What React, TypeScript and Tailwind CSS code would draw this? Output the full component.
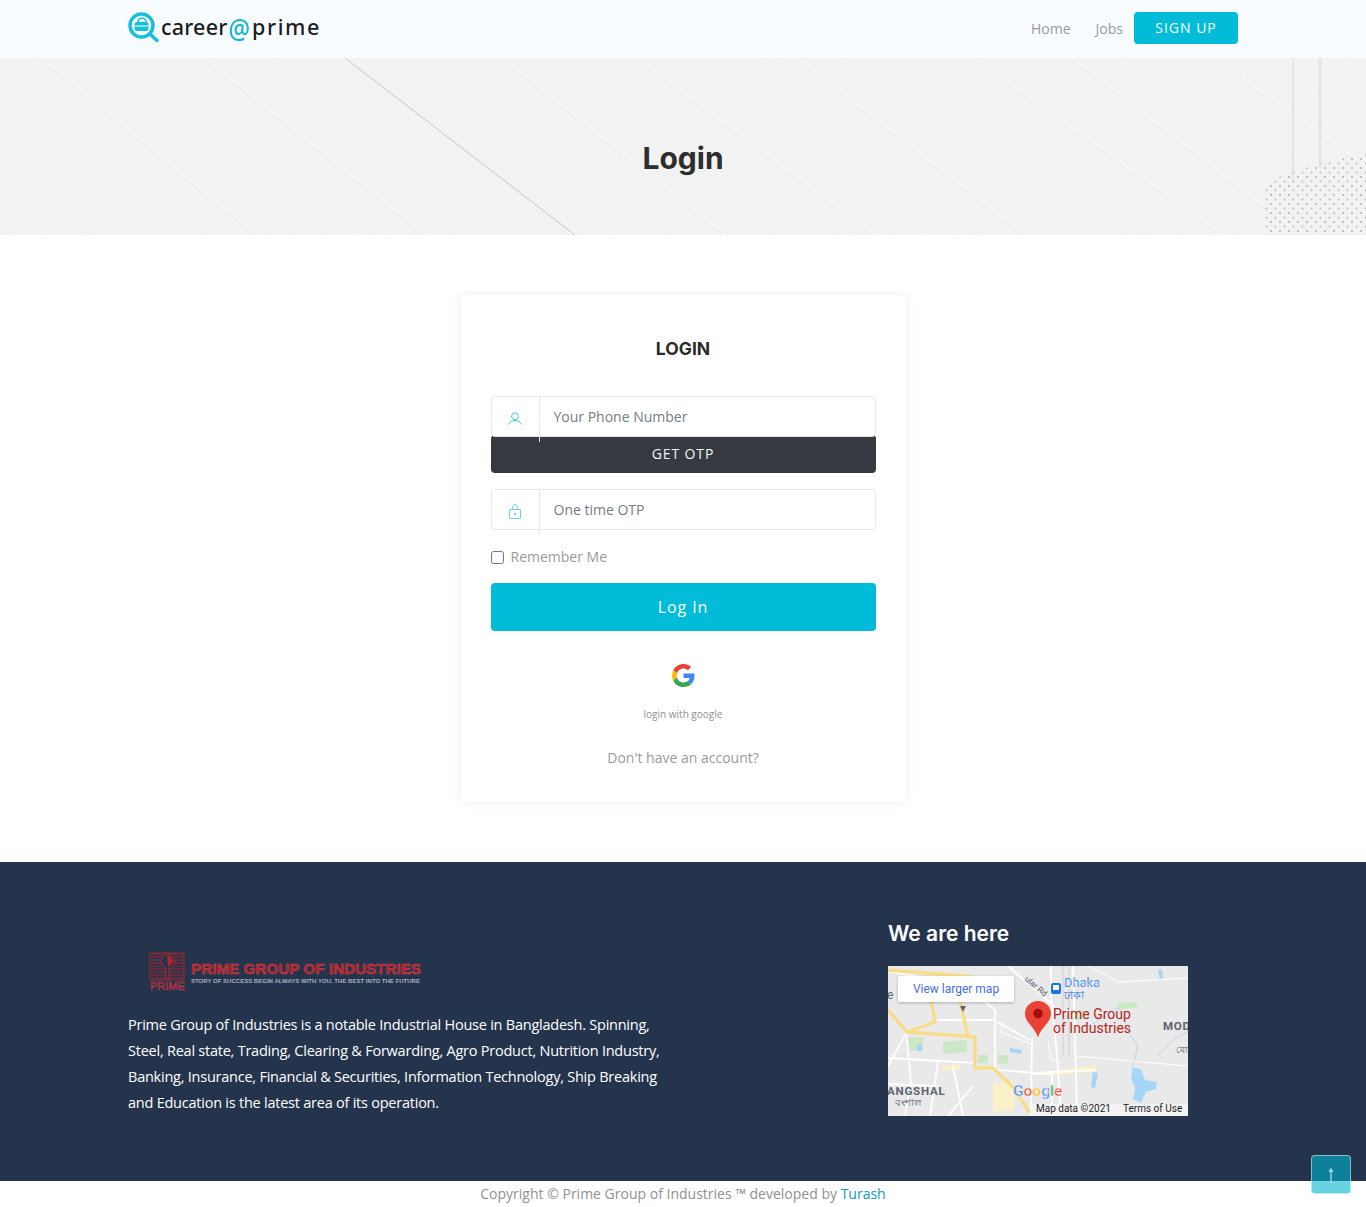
function LogoIcon() {
  return (
    <svg width="32" height="31" viewBox="0 0 32 31" fill="none">
      <circle cx="13.5" cy="13.5" r="11.500" stroke="#17c0da" strokeWidth="3.500" />
      <path d="M6.500 12.500c0-1.500 1-2.500 2.500-2.500h9c1.500 0 2.500 1 2.500 2.500v4c0 1.500-1 2.500-2.500 2.500H9c-1.500 0-2.500-1-2.500-2.500z" fill="#17c0da" />
      <path d="M10 10c0-5 8-5 8 0" stroke="#17c0da" strokeWidth="1.500" />
      <path d="M6.500 14h14" stroke="#fff" strokeWidth="1" />
      <path d="M22 22l7 6.500" stroke="#17c0da" strokeWidth="3.500" strokeLinecap="round" />
    </svg>
  );
}

function HeroArt() {
  const soft = [
    [-30, 172, 90, 270], [30, -8, 270, 190], [195, -6, 440, 190], [490, -8, 740, 190],
    [625, -8, 890, 190], [785, -8, 1040, 190], [960, -8, 1240, 190], [1060, -8, 1290, 170], [1240, 20, 1366, 110],
  ];
  return (
    <svg className="absolute inset-0" width="1366" height="177" viewBox="0 0 1366 177">
      <defs>
        <pattern id="heroDots" width="9" height="9" patternUnits="userSpaceOnUse">
          <circle cx="2" cy="2" r="1.100" fill="#b5b5b5" />
          <circle cx="6.500" cy="6.500" r="1.100" fill="#c4c4c4" />
        </pattern>
        <filter id="heroGrain">
          <feTurbulence type="fractalNoise" baseFrequency="0.9" numOctaves="2" />
          <feColorMatrix values="0 0 0 0 0.5 0 0 0 0 0.5 0 0 0 0 0.5 0 0 0 0.09 0" />
        </filter>
      </defs>
      {soft.map(([x1, y1, x2, y2], i) => (
        <g key={i}>
          <line x1={x1} y1={y1} x2={x2} y2={y2} stroke="#e6e6e6" strokeWidth="1" />
          <line x1={x1 + 2} y1={y1} x2={x2 + 2} y2={y2} stroke="#fafafa" strokeWidth="2" />
        </g>
      ))}
      <line x1="345" y1="0" x2="575" y2="177" stroke="#c8c8c8" strokeWidth="1" />
      <line x1="1293" y1="0" x2="1293" y2="125" stroke="#e2e2e2" strokeWidth="1.500" />
      <line x1="1320" y1="0" x2="1320" y2="110" stroke="#e6e6e6" strokeWidth="3" />
      <path d="M1264 177V125Q1310 105 1366 96V177Z" fill="url(#heroDots)" />
      <rect width="1366" height="177" filter="url(#heroGrain)" />
    </svg>
  );
}

function UserIcon() {
  return (
    <svg width="14" height="13" viewBox="0 0 14 13" fill="none" stroke="#4cc5dc" strokeWidth="1">
      <circle cx="7" cy="4.200" r="3.400" />
      <path d="M.5 12.500c1.500-3 3.500-4 6.500-4s5 1 6.500 4" />
    </svg>
  );
}

function LockIcon() {
  return (
    <svg width="12" height="15" viewBox="0 0 12 15" fill="none" stroke="#6fd0e2" strokeWidth="1">
      <rect x="0.500" y="5.500" width="11" height="9" rx="0.500" />
      <path d="M3.500 5.500V3.300C3.500 1.600 4.500 .6 6 .6s2.500 1 2.500 2.700v2.200" />
      <rect x="5" y="9" width="2" height="2" fill="#6fd0e2" stroke="none" />
    </svg>
  );
}

function GoogleIcon() {
  return (
    <svg width="23" height="23" viewBox="0 0 48 48">
      <path fill="#EA4335" d="M24 9.500c3.540 0 6.710 1.220 9.210 3.600l6.850-6.850C35.900 2.380 30.470 0 24 0 14.620 0 6.510 5.380 2.560 13.220l7.980 6.190C12.430 13.720 17.740 9.500 24 9.500z" />
      <path fill="#4285F4" d="M46.980 24.550c0-1.570-.15-3.090-.38-4.550H24v9.020h12.940c-.58 2.960-2.260 5.480-4.780 7.180l7.730 6c4.510-4.180 7.090-10.360 7.090-17.650z" />
      <path fill="#FBBC05" d="M10.530 28.590c-.48-1.450-.76-2.990-.76-4.590s.27-3.140.76-4.590l-7.980-6.190C.92 16.460 0 20.120 0 24c0 3.880.92 7.540 2.560 10.780l7.970-6.190z" />
      <path fill="#34A853" d="M24 48c6.480 0 11.930-2.130 15.890-5.810l-7.730-6c-2.150 1.450-4.920 2.300-8.160 2.300-6.260 0-11.570-4.220-13.470-9.910l-7.980 6.190C6.510 42.620 14.620 48 24 48z" />
    </svg>
  );
}

function PrimeLogo() {
  return (
    <svg width="274" height="42" viewBox="0 0 274 42">
      <g stroke="#b5242a" strokeWidth="1" opacity="0.85">
        {[3, 6, 9, 12, 15, 18, 21, 24, 27].map((y) => (
          <line key={y} x1="0" x2="35" y1={y} y2={y} />
        ))}
        <path d="M0 2h35v27H0z" fill="none" />
      </g>
      <path d="M18 1l9 9-7 8v10h-3V17l-6-7z" fill="#24344d" stroke="#b5242a" />
      <path d="M18 3l7 7-6 6z" fill="#b5242a" />
      <text x="1" y="39" fontFamily="Liberation Sans, sans-serif" fontSize="11" fill="none" stroke="#c2323a" strokeWidth="0.600">PRIME</text>
      <text x="42" y="23" fontFamily="Liberation Sans, sans-serif" fontWeight="700" fontSize="15" textLength="230" lengthAdjust="spacingAndGlyphs" fill="#a8222a" stroke="#d8444a" strokeWidth="0.500">PRIME GROUP OF INDUSTRIES</text>
      <text x="42" y="32" fontFamily="Liberation Sans, sans-serif" fontWeight="700" fontSize="5" textLength="229" lengthAdjust="spacingAndGlyphs" fill="#aab0ba">STORY OF SUCCESS BEGIN ALWAYS WITH YOU, THE BEST INTO THE FUTURE</text>
    </svg>
  );
}

function MapArt() {
  const font = "Roboto, Arial, sans-serif";
  return (
    <svg width="300" height="150" viewBox="0 0 300 150" className="block">
      <rect width="300" height="150" fill="#e9e9e9" />
      <g fill="#cbe8c6">
        <path d="M55 76l24-2 0 12-24 2z" />
        <path d="M20 72l15-1 0 13-13 1z" />
        <path d="M90 89l10 0 0 8-10 0z" />
        <path d="M110 89l10 0 0 9-10-1z" />
        <path d="M230 37l19-1 0 6-19 1z" />
        <path d="M184 44l11 0 0 10-11 0z" />
      </g>
      <g fill="#fbf0c8">
        <path d="M105 117l20-2 2 29-22 2z" />
        <path d="M160 105l48-6 1 6-49 5z" />
        <path d="M52 100l20-2 0 5-18 2z" />
      </g>
      <g fill="#a5d6f7">
        <path d="M245 102l8 1 4 11 12 2-1 7-10 3-5 11-8-4 2-11-4-10z" />
        <path d="M29 79h5v6h-5z" />
        <path d="M122 82l12 2-1 4-11-2z" />
        <path d="M205 106l5 1-3 15-4-1z" />
        <path d="M270 4l4-1 1 10-3 1z" />
      </g>
      <g fill="none" stroke="#a5d6f7" strokeWidth="0.800">
        <path d="M200 60c14-6 20-16 30-18 8 6 6 24 18 34 4 8-4 20-4 28" />
        <path d="M270 90c8-8 16-20 30-24" />
      </g>
      <g fill="none" stroke="#cfcfcf" strokeWidth="1">
        <path d="M175 0v90" />
        <path d="M181 0v90" />
      </g>
      <g fill="none" stroke="#ffffff" strokeWidth="1.800">
        <path d="M0 5l40 8 40 10 26 20" />
        <path d="M49 54l56 0 37 20" />
        <path d="M0 92l87 5" />
        <path d="M87 102l60 5 60-3" />
        <path d="M107 43l0 60" />
        <path d="M144 72l-1 78" />
        <path d="M163 0l0 30 6 60 4 60" />
        <path d="M185 0l2 70 2 80" />
        <path d="M120 0l46 40" />
        <path d="M50 96l-8 54" />
        <path d="M19 66l-19 34" />
        <path d="M65 100l10 50" />
        <path d="M85 120l-25 30" />
        <path d="M144 108l20 0 0 42" />
        <path d="M0 118l50 2" />
        <path d="M18 66l5 50-6 34" />
        <path d="M187 90l113 10" strokeWidth="1" />
        <path d="M200 0l30 16 70-4" strokeWidth="1" />
        <path d="M115 56l-2 10 30 12" strokeWidth="1" />
        <path d="M160 75l3 18 10 3" strokeWidth="1" />
      </g>
      <g fill="none" stroke="#f8dc88" strokeWidth="3.400" strokeLinejoin="round">
        <path d="M0 44l19 22 68 5 0 31 18 0 20 19 17 26" />
        <path d="M0 4l39 3 8 49-28 10" />
        <path d="M39 7l46 4" />
        <path d="M72 34l8 37" />
      </g>
      <text x="-1" y="33" fontFamily={font} fontSize="12" fill="#5c6470">e</text>
      <text x="-1" y="129" fontFamily={font} fontWeight="700" fontSize="11.500" letterSpacing="0.800" fill="#5c6470">ANGSHAL</text>
      <text x="7" y="140" fontFamily={font} fontSize="10" fill="#5c6470">বংশাল</text>
      <text x="275" y="64" fontFamily={font} fontWeight="700" fontSize="11.500" letterSpacing="0.800" fill="#5c6470">MOD</text>
      <text x="288" y="87" fontFamily={font} fontSize="9" fill="#5c6470">মো</text>
      <text x="136" y="14" fontFamily={font} fontSize="8.500" fill="#5c6470" transform="rotate(40 136 14)">ular Rd</text>
      <rect x="163" y="17" width="10" height="11" rx="2" fill="#1a73e8" />
      <rect x="165" y="19" width="6" height="5" fill="#fff" />
      <text x="176" y="21" fontFamily={font} fontSize="12.800" fill="#1a73e8" stroke="#fff" strokeWidth="0.200">Dhaka</text>
      <text x="176" y="33" fontFamily={font} fontSize="10.500" fill="#1a73e8">ঢাকা</text>
      <path d="M150 35c-7.200 0-13 5.600-13 12.500 0 9.500 10.500 14 13 24 2.500-10 13-14.500 13-24C163 40.600 157.200 35 150 35z" fill="#ea4335" />
      <circle cx="150" cy="47.500" r="4.800" fill="#a50e0e" />
      <text x="165" y="53" fontFamily={font} fontSize="14" fill="#b3261e">Prime Group</text>
      <text x="165" y="67" fontFamily={font} fontSize="14" fill="#b3261e">of Industries</text>
      <text x="125" y="130" fontFamily={font} fontWeight="500" fontSize="15.500" stroke="#fff" strokeWidth="0.300">
        <tspan fill="#4285f4">G</tspan><tspan fill="#ea4335">o</tspan><tspan fill="#fbbc05">o</tspan><tspan fill="#4285f4">g</tspan><tspan fill="#34a853">l</tspan><tspan fill="#ea4335">e</tspan>
      </text>
      <rect x="143" y="138" width="157" height="12" fill="#f5f5f5" opacity="0.800" />
      <text x="148" y="146" fontFamily={font} fontSize="10" fill="#222">Map data ©2021</text>
      <text x="235" y="146" fontFamily={font} fontSize="10" fill="#222">Terms of Use</text>
      <path d="M72 40l3 6 3-6z" fill="#5c6470" />
    </svg>
  );
}

export default function App() {
  return (
    <div className="relative h-[1207px] overflow-hidden bg-white font-['Open_Sans',sans-serif] text-[#6c757d]">
      <header className="h-[58px] bg-[#f8fcff] pl-[128px] pr-[128px] flex items-center justify-between">
        <div className="flex items-center h-[58px] pb-[4px]">
          <LogoIcon />
          <span className="ml-[1px] font-['Noto_Sans',sans-serif] font-medium text-[21.500px] text-[#1c1c22] flex items-center">
            <span className="tracking-[0.2px]">career</span>
            <span className="inline-block scale-y-[1.15] text-[#17b6d3] text-[24px] leading-[24px] mt-[3px] ml-[1px] mr-[2px]">@</span>
            <span className="tracking-[1.6px]">prime</span>
          </span>
        </div>
        <nav className="flex items-center mb-[2px]">
          <span className="text-[14px] text-[#999a9c] mr-[25px]">Home</span>
          <span className="text-[14px] text-[#999a9c] mr-[11px]">Jobs</span>
          <span className="w-[104px] h-[32px] flex items-center justify-center rounded-[4px] bg-[#00bcd8] text-white text-[14px] font-medium tracking-[1px] pb-[1px]">SIGN UP</span>
        </nav>
      </header>

      <section className="relative h-[177px] bg-[#f5f5f5] flex items-center justify-center overflow-hidden">
        <HeroArt />
        <h1 className="relative text-[#2e2e2e] font-['Inter',sans-serif] font-bold text-[30px] mt-[24px]">Login</h1>
      </section>

      <main className="h-[627px] pt-[60px] flex justify-center">
        <div className="w-[445px] h-[507px] bg-white shadow-[0_0_10px_rgba(0,0,0,0.08)] px-[30px] pt-[43px]">
          <h2 className="text-center text-[#2b2b2b] font-['Inter',sans-serif] font-bold text-[17.500px] leading-[22px]">LOGIN</h2>

          <div className="relative z-10 mt-[36px] flex h-[41px] rounded-[4px] border border-[#e8e8e8] bg-white">
            <div className="w-[48px] flex items-center justify-center border-r border-[#e8e8e8] pt-[4px]">
              <UserIcon />
            </div>
            <input className="flex-1 min-w-0 pl-[14px] text-[14px] text-[#6c757d] placeholder:text-[#757c84] outline-none bg-transparent" placeholder="Your Phone Number" />
            <span className="absolute left-[47px] top-[40px] z-10 w-px h-[5px] bg-[#e8e8e8]" />
          </div>
          <button className="w-full h-[38px] mt-[-2px] rounded-[4px] bg-[#343a40] text-[#f4f4f4] text-[14px] font-medium tracking-[0.9px] flex items-center justify-center pb-[2px]">GET OTP</button>

          <div className="relative mt-[16px] flex h-[41px] rounded-[4px] border border-[#e8e8e8] bg-white">
            <div className="w-[48px] flex items-center justify-center border-r border-[#e8e8e8] pt-[4px]">
              <LockIcon />
            </div>
            <input className="flex-1 min-w-0 pl-[14px] text-[14px] text-[#6c757d] placeholder:text-[#757c84] outline-none bg-transparent" placeholder="One time OTP" />
            <span className="absolute left-[47px] top-[40px] w-px h-[5px] bg-[#e8e8e8]" />
          </div>

          <label className="mt-[16px] flex items-center h-[20px] text-[14px] text-[#999a9c]">
            <input type="checkbox" className="m-0 w-[13px] h-[13px] mr-[7px] mt-[2px]" />
            Remember Me
          </label>

          <button className="mt-[17px] w-full h-[48px] rounded-[4px] bg-[#00bcd8] text-white text-[16px] font-medium tracking-[0.9px]">Log In</button>

          <div className="mt-[33px] flex justify-center"><GoogleIcon /></div>
          <p className="mt-[20px] text-center text-[10px] leading-[14px] text-[#8f9194]">login with google</p>
          <p className="mt-[27px] text-center text-[14px] leading-[20px] text-[#999a9c]">Don&apos;t have an account?</p>
        </div>
      </main>

      <footer className="h-[319px] bg-[#24344d] pl-[128px] pr-[128px] flex">
        <div className="w-[760px] pt-[89px]">
          <div className="pl-[21px]"><PrimeLogo /></div>
          <p className="mt-[19px] w-[540px] text-[14.500px] leading-[26px] tracking-[-0.235px] text-white">
            Prime Group of Industries is a notable Industrial House in Bangladesh. Spinning,<br />
            Steel, Real state, Trading, Clearing &amp; Forwarding, Agro Product, Nutrition Industry,<br />
            Banking, Insurance, Financial &amp; Securities, Information Technology, Ship Breaking<br />
            and Education is the latest area of its operation.
          </p>
        </div>
        <div className="pt-[58px]">
          <h3 className="font-['Inter',sans-serif] font-semibold text-[21px] leading-[28px] text-white">We are here</h3>
          <div className="relative mt-[18px] w-[300px] h-[150px] overflow-hidden">
            <MapArt />
            <div className="absolute left-[10px] top-[10px] w-[116px] h-[26px] bg-white rounded-[2px] shadow-[0_1px_3px_rgba(0,0,0,0.25)] flex items-center justify-center font-['Roboto',sans-serif] text-[12px] text-[#4a6de5]">View larger map</div>
          </div>
        </div>
      </footer>

      <div className="h-[26px] text-center text-[14px] leading-[26px] text-[#8f9194]">
        Copyright © Prime Group of Industries ™ developed by <span className="text-[#0e9db8]">Turash</span>
      </div>

      <div className="absolute left-[1311px] top-[1155px] w-[40px] h-[39px] rounded-[4px] border border-white/50 bg-[#00b4cf]/60 flex items-center justify-center">
        <svg width="8" height="16" viewBox="0 0 8 16" className="mt-[3px]">
          <path d="M4 15V1M2 4l2-3 2 3" stroke="#a8e4ee" strokeWidth="1.200" fill="none" />
        </svg>
      </div>
    </div>
  );
}
